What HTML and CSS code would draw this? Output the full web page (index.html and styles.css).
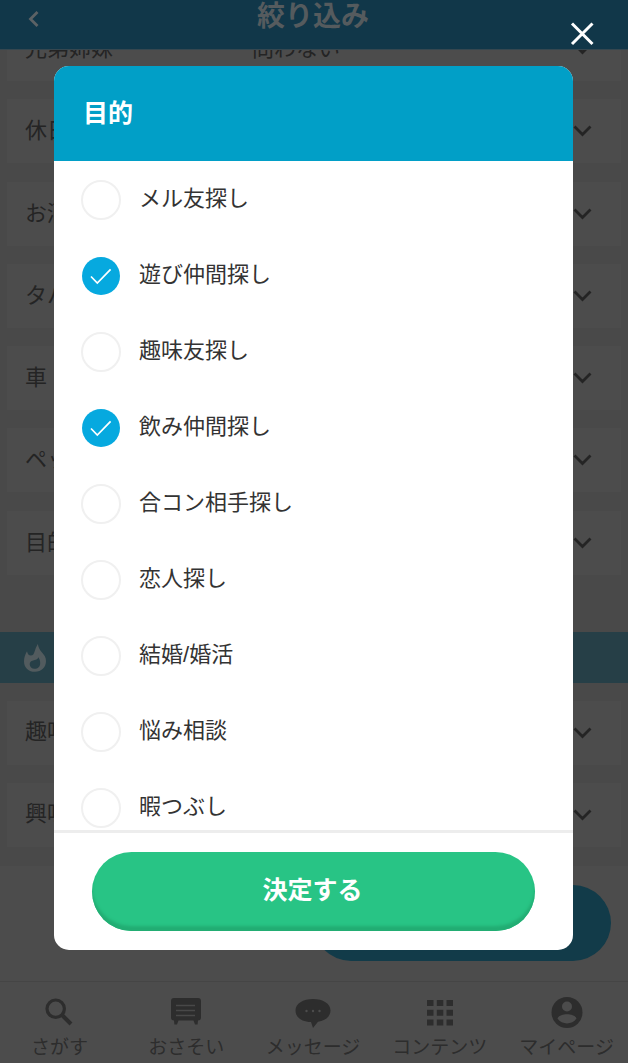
FILE: index.html
```
<!DOCTYPE html>
<html lang="ja">
<head>
<meta charset="utf-8">
<title>絞り込み</title>
<link rel="stylesheet" href="styles.css">
</head>
<body>
<svg class="defs" width="0" height="0" aria-hidden="true">
  <symbol id="chev" viewBox="0 0 20 14"><path d="M1.500 2.500 L9.500 10.500 L17.500 2.500" fill="none" stroke="currentColor" stroke-width="2.800"/></symbol>
  <symbol id="check" viewBox="0 0 38 38"><path d="M9 19.5 L15.3 26 L28.6 12.3" fill="none" stroke="currentColor" stroke-width="1.7"/></symbol>
</svg>
<div class="screen">
  <header class="topbar">
    <svg class="back" viewBox="0 0 12 18"><path d="M9.500 2 L2.500 9 L9.500 16" fill="none" stroke="currentColor" stroke-width="2.800"/></svg>
    <h1 class="topbar-title">絞り込み</h1>
  </header>
  <main class="filters">
    <div class="row row-cut"><span class="name">兄弟姉妹</span><span class="value">問わない</span><svg class="chev"><use href="#chev"/></svg></div>
    <div class="row"><span class="name">休日</span><svg class="chev"><use href="#chev"/></svg></div>
    <div class="row"><span class="name">お酒</span><svg class="chev"><use href="#chev"/></svg></div>
    <div class="row"><span class="name">タバコ</span><svg class="chev"><use href="#chev"/></svg></div>
    <div class="row"><span class="name">車</span><svg class="chev"><use href="#chev"/></svg></div>
    <div class="row"><span class="name">ペット</span><svg class="chev"><use href="#chev"/></svg></div>
    <div class="row"><span class="name">目的</span><svg class="chev"><use href="#chev"/></svg></div>
    <div class="section">
      <svg class="flame" viewBox="0 0 24 28"><path fill="currentColor" fill-rule="evenodd" d="M14.8 0 C15.4 3.5 17 6 19 8.6 C21.3 11.4 23 13.3 23 17 C23 23.5 18.3 27.8 12 27.8 C5.700 27.800 1 23.500 1 17.400 C1 13.500 2.300 10 4 7.200 C4.500 9.800 5.800 11.600 7.800 11.600 C10 11.600 11 9.800 11.600 7.500 C12.300 4.900 13.300 2.500 14.800 0 Z M15.300 13.300 C14.800 15.600 12.300 16 10.100 16.500 C7.900 17 6.700 18.400 6.700 20.300 C6.700 23 8.800 24.800 11.500 24.800 C15 24.800 17.200 22.500 17.200 18.900 C17.200 16.800 16.400 14.900 15.300 13.300 Z"/></svg>
    </div>
    <div class="row"><span class="name">趣味</span><svg class="chev"><use href="#chev"/></svg></div>
    <div class="row"><span class="name">興味</span><svg class="chev"><use href="#chev"/></svg></div>
  </main>
  <div class="actions"><div class="search-btn"></div></div>
  <nav class="tabs">
    <div class="tab"><svg viewBox="0 0 32 32"><g fill="none" stroke="currentColor"><circle cx="12.700" cy="11.700" r="8.700" stroke-width="3.200"/><path d="M19 18 L28 27" stroke-width="4"/></g></svg><span>さがす</span></div>
    <div class="tab"><svg viewBox="0 0 32 32"><path fill="currentColor" d="M4 1 H28 Q31 1 31 4 V20.500 Q31 23.500 28 23.500 L27.600 27.500 H25 L23.500 23.500 H8.500 L7 27.500 H4.400 L4 23.500 Q1 23.500 1 20.500 V4 Q1 1 4 1 Z"/><path d="M6 8.500 H25 M6 13.500 H25 M6 18.500 H25" stroke="#484848" stroke-width="1.400"/></svg><span>おさそい</span></div>
    <div class="tab"><svg class="wide" viewBox="0 0 36 32"><path fill="currentColor" d="M18 2 C28 2 35.500 6.500 35.500 13.500 C35.500 19.500 30 24 23 24.800 L18 31 L16 25 C7 25 0.500 20.500 0.500 13.500 C0.500 6.500 8 2 18 2 Z"/><g fill="#4c4c4c"><circle cx="11.500" cy="14" r="1.200"/><circle cx="18" cy="14" r="1.200"/><circle cx="24.500" cy="14" r="1.200"/></g></svg><span>メッセージ</span></div>
    <div class="tab"><svg viewBox="0 0 32 32"><path fill="currentColor" d="M3 3h6.500v6H3zM12.800 3h6.500v6h-6.500zM22.500 3H29v6h-6.500zM3 12.800h6.500v6H3zM12.800 12.800h6.500v6h-6.500zM22.500 12.800H29v6h-6.500zM3 22.500h6.500v6H3zM12.800 22.500h6.500v6h-6.500zM22.500 22.500H29v6h-6.500z"/></svg><span>コンテンツ</span></div>
    <div class="tab"><svg viewBox="0 0 32 32"><circle cx="16" cy="15.500" r="15.500" fill="currentColor"/><circle cx="16" cy="9.500" r="5" fill="#4c4c4c"/><path d="M6.500 21.500 C8.500 15.800 23.500 15.800 25.500 21.500 C21 28 11 28 6.500 21.500 Z" fill="#4c4c4c"/></svg><span>マイページ</span></div>
  </nav>
</div>

<svg class="close" viewBox="0 0 24 24"><path d="M2 1.500 L22.500 22 M22.500 1.500 L2 22" stroke="#fff" stroke-width="3"/></svg>

<section class="modal">
  <h2 class="modal-title">目的</h2>
  <div class="options">
    <div class="option"><span class="radio"></span><span>メル友探し</span></div>
    <div class="option"><span class="radio on"><svg><use href="#check"/></svg></span><span>遊び仲間探し</span></div>
    <div class="option"><span class="radio"></span><span>趣味友探し</span></div>
    <div class="option"><span class="radio on"><svg><use href="#check"/></svg></span><span>飲み仲間探し</span></div>
    <div class="option"><span class="radio"></span><span>合コン相手探し</span></div>
    <div class="option"><span class="radio"></span><span>恋人探し</span></div>
    <div class="option"><span class="radio"></span><span>結婚<span class="slash">/</span>婚活</span></div>
    <div class="option"><span class="radio"></span><span>悩み相談</span></div>
    <div class="option"><span class="radio"></span><span>暇つぶし</span></div>
  </div>
  <footer class="modal-foot"><button class="submit">決定する</button></footer>
</section>
</body>
</html>
```
FILE: styles.css
```
* { box-sizing: border-box; margin: 0; padding: 0; }
body {
  position: relative;
  width: 628px;
  height: 1063px;
  overflow: hidden;
  background: #4c4c4c;
  font-family: "Noto Sans CJK JP", sans-serif;
}
.defs { display: block; width: 0; height: 0; }

/* Dimmed page */
.screen { display: flex; flex-direction: column; height: 1063px; color: #242424; }
.topbar {
  flex: none;
  display: grid;
  grid-template-columns: 60px 1fr 62px;
  height: 50px;
  background: #113749;
  border-bottom: 1px solid #354750;
  color: #5c6265;
}
.back { width: 12px; height: 18px; margin: 10px 0 0 28px; }
.topbar-title { font-size: 28px; font-weight: 700; line-height: 28px; text-align: center; color: #555b5e; }
.filters {
  flex: none;
  height: 816px;
  padding: 0 7px;
  overflow: hidden;
  background: #494949;
}
.row {
  display: flex;
  align-items: center;
  height: 64px;
  margin-bottom: 18.300px;
  padding: 0 28px 0 18px;
  background: #4c4c4c;
  font-size: 22px;
}
.row .name { width: 227px; margin-top: -6px; white-space: nowrap; }
.row .value { margin-top: -6px; }
.row-cut { margin-top: -33px; }
.chev { width: 20px; height: 14px; margin-left: auto; }
.section {
  display: flex;
  align-items: center;
  height: 51px;
  margin: 57.500px -7px 17.500px;
  padding-left: 23px;
  background: #263f47;
  color: #525b5e;
}
.section ~ .row .name { margin-top: -8px; }
.flame { width: 24px; height: 28px; }
.actions { flex: none; height: 115px; padding: 19px 17px 0 0; display: flex; justify-content: flex-end; }
.search-btn { width: 298px; height: 76px; border-radius: 38px; background: #123b49; }
.tabs {
  flex: none;
  display: grid;
  grid-template-columns: repeat(5, 1fr);
  height: 82px;
  margin: 0 -2px 0 -4px;
  border-top: 1px solid #454545;
  color: #2d2d2d;
  font-size: 19px;
}
.tab { display: flex; flex-direction: column; align-items: center; padding-top: 15px; white-space: nowrap; line-height: 28px; }
.tab svg { width: 32px; height: 32px; margin-bottom: 3px; }
.tab .wide { width: 36px; }

/* Dialog */
.close { position: absolute; left: 570px; top: 22px; width: 24px; height: 24px; }
.modal {
  position: absolute;
  left: 54px;
  top: 66px;
  display: flex;
  flex-direction: column;
  width: 519px;
  height: 884px;
  overflow: hidden;
  border-radius: 15px;
  background: #fff;
}
.modal-title { flex: none; height: 95px; padding-left: 29px; background: #019fc7; color: #fff; font-size: 25px; font-weight: 700; line-height: 90px; }
.options { flex: none; height: 669px; overflow: hidden; color: #333; font-size: 22px; }
.option { display: flex; align-items: center; gap: 18px; height: 76px; padding-left: 27px; }
.option > span:last-child { margin-top: -6px; }
.slash { font-family: "Liberation Sans", Arial, sans-serif; }
.radio { flex: none; width: 40px; height: 40px; margin-top: 1px; border: 2px solid #f0f0f0; border-radius: 50%; }
.radio.on { width: 38px; height: 38px; margin: 1px 1px 0; border: 0; background: #06a9df; color: #fff; }
.radio svg { display: block; width: 38px; height: 38px; }
.modal-foot { flex: 1; padding: 19px 38px; border-top: 3px solid #ededed; }
.submit {
  display: block;
  width: 443px;
  height: 79px;
  padding: 0 2px 8px 0;
  border: 0;
  border-radius: 40px;
  background: #28c485;
  box-shadow: inset 0 -5px 3px #22ad73;
  color: #fff;
  font: 700 25px "Noto Sans CJK JP", sans-serif;
}
```
